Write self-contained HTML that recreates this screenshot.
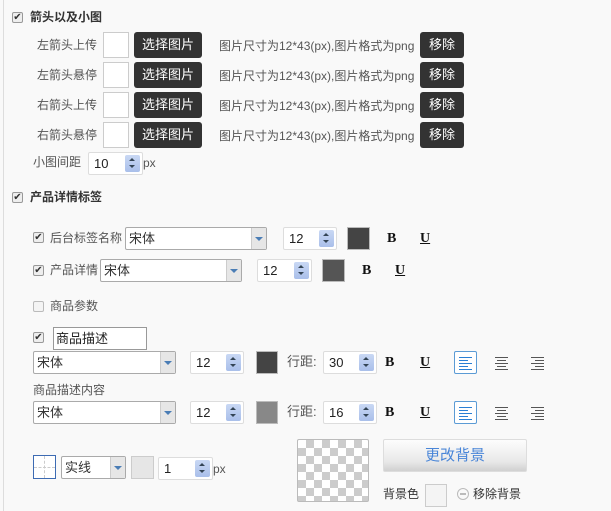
<!DOCTYPE html>
<html><head><meta charset="utf-8"><style>
*{box-sizing:border-box;margin:0;padding:0}
body{width:611px;height:511px;background:#f9f9f9;font-family:"Liberation Sans","Noto Sans CJK SC",sans-serif;font-size:12px;color:#555;position:relative;overflow:hidden}
.a{position:absolute}
.vl{left:3px;top:0;width:1px;height:511px;background:#ddd}
.cb{position:absolute;width:11px;height:11px;border:1px solid #999;border-radius:2px;background:#eee;font-size:10px;line-height:9px;text-align:center;color:#333}
.t{position:absolute;white-space:nowrap;line-height:14px}
.h{font-weight:bold;color:#333}
.box{position:absolute;width:26px;height:26px;border:1px solid #ccc;background:#fff}
.btn{position:absolute;height:26px;background:#333;color:#fff;border-radius:3px;text-align:center;line-height:26px;font-size:13px}
.sel{position:absolute;height:23px;border:1px solid #aaa;border-radius:2px;background:#fff;font-size:13px;line-height:21px;padding-left:3px;color:#333}
.sel:after{content:"";position:absolute;right:0;top:0;width:14px;height:21px;background:#e6e6e6;border-left:1px solid #ccc}
.sel i{position:absolute;right:3px;top:9px;width:0;height:0;border-left:4px solid transparent;border-right:4px solid transparent;border-top:4px solid #4a7db5;z-index:2}
.sp{position:absolute;height:23px;border:1px solid #ddd;border-radius:2px;background:#fff;font-size:13px;line-height:21px;padding-left:5px;color:#222}
.sp b{position:absolute;right:2px;top:2px;width:15px;height:17px;background:linear-gradient(#c9d8f4,#a9bfea);border-radius:2px}
.sp b:before{content:"";position:absolute;left:4px;top:3px;border-left:3px solid transparent;border-right:3px solid transparent;border-bottom:3px solid #345}
.sp b:after{content:"";position:absolute;left:4px;top:10px;border-left:3px solid transparent;border-right:3px solid transparent;border-top:3px solid #345}
.sw{position:absolute;height:23px;border:1px solid #bbb}
.B{position:absolute;font-family:"Liberation Serif",serif;font-weight:bold;font-size:14px;color:#111}
.U{text-decoration:underline}
.al{position:absolute;width:23px;height:23px}
.al span{position:absolute;height:1px;background:#555}
</style></head><body>
<div class="a vl"></div>

<div class="cb" style="left:12px;top:12px">✔</div>
<div class="t h" style="left:30px;top:10px">箭头以及小图</div>

<div class="t" style="left:37px;top:38px">左箭头上传</div>
<div class="t" style="left:37px;top:68px">左箭头悬停</div>
<div class="t" style="left:37px;top:98px">右箭头上传</div>
<div class="t" style="left:37px;top:128px">右箭头悬停</div>
<div class="box" style="left:103px;top:32px"></div>
<div class="box" style="left:103px;top:62px"></div>
<div class="box" style="left:103px;top:92px"></div>
<div class="box" style="left:103px;top:122px"></div>
<div class="btn" style="left:134px;top:32px;width:68px">选择图片</div>
<div class="btn" style="left:134px;top:62px;width:68px">选择图片</div>
<div class="btn" style="left:134px;top:92px;width:68px">选择图片</div>
<div class="btn" style="left:134px;top:122px;width:68px">选择图片</div>
<div class="t" style="left:219px;top:39px">图片尺寸为12*43(px),图片格式为png</div>
<div class="t" style="left:219px;top:69px">图片尺寸为12*43(px),图片格式为png</div>
<div class="t" style="left:219px;top:99px">图片尺寸为12*43(px),图片格式为png</div>
<div class="t" style="left:219px;top:129px">图片尺寸为12*43(px),图片格式为png</div>
<div class="btn" style="left:420px;top:32px;width:44px">移除</div>
<div class="btn" style="left:420px;top:62px;width:44px">移除</div>
<div class="btn" style="left:420px;top:92px;width:44px">移除</div>
<div class="btn" style="left:420px;top:122px;width:44px">移除</div>

<div class="t" style="left:33px;top:155px">小图间距</div>
<div class="sp" style="left:88px;top:152px;width:55px">10<b></b></div>
<div class="t" style="left:143px;top:156px">px</div>

<div class="cb" style="left:12px;top:192px">✔</div>
<div class="t h" style="left:30px;top:190px">产品详情标签</div>

<div class="cb" style="left:33px;top:232px">✔</div>
<div class="t" style="left:50px;top:231px">后台标签名称</div>
<div class="sel" style="left:125px;top:227px;width:142px">宋体<i></i></div>
<div class="sp" style="left:283px;top:227px;width:54px">12<b></b></div>
<div class="sw" style="left:347px;top:227px;width:23px;background:#444"></div>
<div class="B" style="left:387px;top:231px">B</div>
<div class="B U" style="left:420px;top:231px">U</div>

<div class="cb" style="left:33px;top:265px">✔</div>
<div class="t" style="left:50px;top:263px">产品详情</div>
<div class="sel" style="left:100px;top:259px;width:142px">宋体<i></i></div>
<div class="sp" style="left:257px;top:259px;width:55px">12<b></b></div>
<div class="sw" style="left:322px;top:259px;width:23px;background:#555"></div>
<div class="B" style="left:362px;top:263px">B</div>
<div class="B U" style="left:395px;top:263px">U</div>

<div class="cb" style="left:33px;top:301px;background:#f4f4f4;border-color:#bbb"></div>
<div class="t" style="left:50px;top:299px">商品参数</div>

<div class="cb" style="left:33px;top:332px">✔</div>
<div class="a" style="left:53px;top:327px;width:94px;height:23px;border:1px solid #999;background:#fff;font-size:13px;line-height:21px;padding-left:2px;color:#222">商品描述</div>

<div class="sel" style="left:33px;top:351px;width:143px">宋体<i></i></div>
<div class="sp" style="left:190px;top:351px;width:54px">12<b></b></div>
<div class="sw" style="left:256px;top:351px;width:22px;background:#444"></div>
<div class="t" style="left:287px;top:355px;font-size:13px">行距:</div>
<div class="sp" style="left:323px;top:351px;width:54px">30<b></b></div>
<div class="B" style="left:385px;top:355px">B</div>
<div class="B U" style="left:420px;top:355px">U</div>
<div class="al" style="left:454px;top:351px;border:1px solid #5b9bd5;border-radius:2px;background:#fff"><span style="left:4px;top:5px;width:13px;background:#2a7fd4"></span><span style="left:4px;top:8px;width:9px;background:#2a7fd4"></span><span style="left:4px;top:11px;width:13px;background:#2a7fd4"></span><span style="left:4px;top:14px;width:9px;background:#2a7fd4"></span><span style="left:4px;top:17px;width:13px;background:#2a7fd4"></span></div>
<div class="al" style="left:490px;top:351px"><span style="left:5px;top:6px;width:13px"></span><span style="left:7px;top:9px;width:9px"></span><span style="left:5px;top:12px;width:13px"></span><span style="left:7px;top:15px;width:9px"></span><span style="left:5px;top:18px;width:13px"></span></div>
<div class="al" style="left:526px;top:351px"><span style="left:5px;top:6px;width:13px"></span><span style="left:9px;top:9px;width:9px"></span><span style="left:5px;top:12px;width:13px"></span><span style="left:9px;top:15px;width:9px"></span><span style="left:5px;top:18px;width:13px"></span></div>

<div class="t" style="left:33px;top:383px">商品描述内容</div>
<div class="sel" style="left:33px;top:401px;width:143px">宋体<i></i></div>
<div class="sp" style="left:190px;top:401px;width:54px">12<b></b></div>
<div class="sw" style="left:256px;top:401px;width:22px;background:#888"></div>
<div class="t" style="left:287px;top:405px;font-size:13px">行距:</div>
<div class="sp" style="left:323px;top:401px;width:54px">16<b></b></div>
<div class="B" style="left:385px;top:405px">B</div>
<div class="B U" style="left:420px;top:405px">U</div>
<div class="al" style="left:454px;top:401px;border:1px solid #5b9bd5;border-radius:2px;background:#fff"><span style="left:4px;top:5px;width:13px;background:#2a7fd4"></span><span style="left:4px;top:8px;width:9px;background:#2a7fd4"></span><span style="left:4px;top:11px;width:13px;background:#2a7fd4"></span><span style="left:4px;top:14px;width:9px;background:#2a7fd4"></span><span style="left:4px;top:17px;width:13px;background:#2a7fd4"></span></div>
<div class="al" style="left:490px;top:401px"><span style="left:5px;top:6px;width:13px"></span><span style="left:7px;top:9px;width:9px"></span><span style="left:5px;top:12px;width:13px"></span><span style="left:7px;top:15px;width:9px"></span><span style="left:5px;top:18px;width:13px"></span></div>
<div class="al" style="left:526px;top:401px"><span style="left:5px;top:6px;width:13px"></span><span style="left:9px;top:9px;width:9px"></span><span style="left:5px;top:12px;width:13px"></span><span style="left:9px;top:15px;width:9px"></span><span style="left:5px;top:18px;width:13px"></span></div>

<div class="a" style="left:33px;top:455px;width:23px;height:24px;border:1px solid #3d6bb3;background:#fff"><div class="a" style="left:10px;top:0;width:0;height:22px;border-left:1px dashed #ccc"></div><div class="a" style="left:0;top:11px;width:21px;height:0;border-top:1px dashed #ccc"></div></div>
<div class="sel" style="left:61px;top:456px;width:65px">实线<i></i></div>
<div class="sw" style="left:131px;top:456px;width:23px;background:#e6e6e6;border-color:#ccc"></div>
<div class="sp" style="left:158px;top:457px;width:55px">1<b></b></div>
<div class="t" style="left:213px;top:462px">px</div>

<div class="a" style="left:297px;top:439px;width:72px;height:63px;border:1px solid #bbb;border-radius:2px;background-color:#fff;background-image:linear-gradient(45deg,#ccc 25%,transparent 25%,transparent 75%,#ccc 75%),linear-gradient(45deg,#ccc 25%,transparent 25%,transparent 75%,#ccc 75%);background-size:16px 16px;background-position:0 0,8px 8px"></div>
<div class="a" style="left:383px;top:439px;width:144px;height:33px;border:1px solid #ddd;border-radius:2px;background:linear-gradient(#fdfdfd,#e8e8e8 70%,#d0d0d0);color:#4a86d8;font-size:15px;text-align:center;line-height:31px">更改背景</div>
<div class="t h" style="left:383px;top:487px;font-weight:normal;color:#333">背景色</div>
<div class="a" style="left:425px;top:484px;width:22px;height:23px;border:1px solid #ccc;background:#f4f4f4"></div>
<div class="a" style="left:457px;top:488px;width:12px;height:12px;border:1px solid #bbb;border-radius:50%"><div class="a" style="left:2px;top:4px;width:6px;height:2px;background:#bbb"></div></div>
<div class="t" style="left:473px;top:487px;color:#333">移除背景</div>
</body></html>
